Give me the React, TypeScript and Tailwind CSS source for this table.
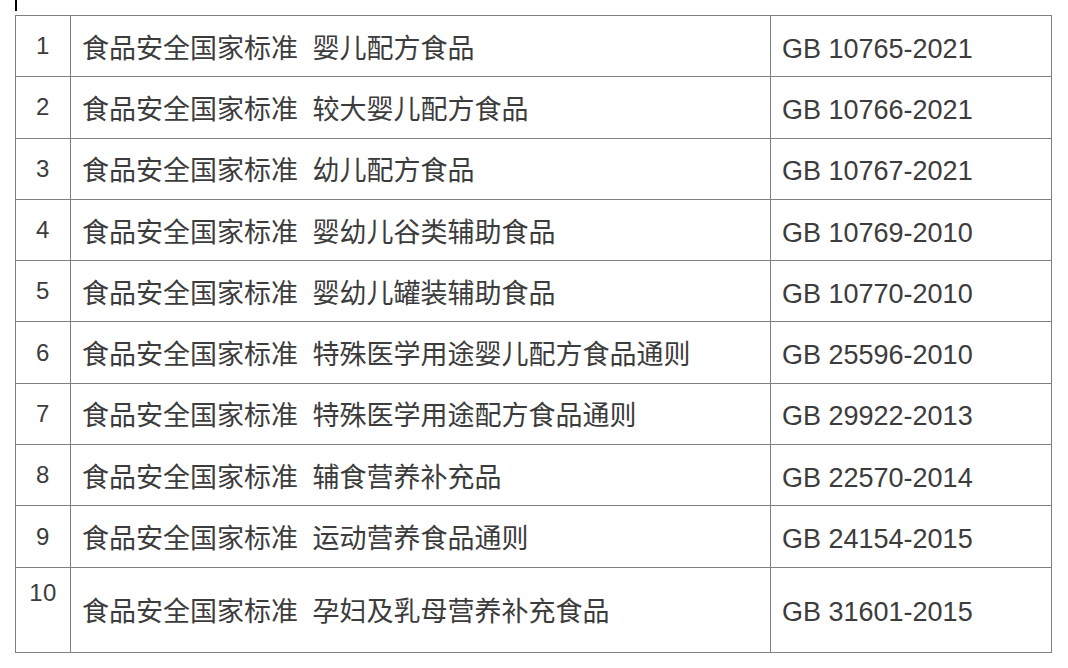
import React from "react";

const rows: [string, string, string][] = [
  ["1", "食品安全国家标准 婴儿配方食品", "GB 10765-2021"],
  ["2", "食品安全国家标准 较大婴儿配方食品", "GB 10766-2021"],
  ["3", "食品安全国家标准 幼儿配方食品", "GB 10767-2021"],
  ["4", "食品安全国家标准 婴幼儿谷类辅助食品", "GB 10769-2010"],
  ["5", "食品安全国家标准 婴幼儿罐装辅助食品", "GB 10770-2010"],
  ["6", "食品安全国家标准 特殊医学用途婴儿配方食品通则", "GB 25596-2010"],
  ["7", "食品安全国家标准 特殊医学用途配方食品通则", "GB 29922-2013"],
  ["8", "食品安全国家标准 辅食营养补充品", "GB 22570-2014"],
  ["9", "食品安全国家标准 运动营养食品通则", "GB 24154-2015"],
];

const numCls = "text-[24px] leading-[30px] tracking-[0.5px]";

export default function App() {
  return (
    <div
      className="w-[1068px] h-[668px] bg-white text-[#3c3c3c]"
      style={{ fontFamily: '"Liberation Sans", "Noto Sans CJK SC", sans-serif' }}
    >
      <div className="ml-[15px] w-[2px] h-[11px] bg-black" />
      <div className="mt-[4px] ml-[15px] w-[1037px] border-l border-t border-[#808080] grid grid-cols-[55px_700px_281px]">
        {rows.map(([n, name, code]) => (
          <React.Fragment key={n}>
            <div className="h-[61.3px] border-r border-b border-[#808080] flex items-center justify-center">
              <span className={numCls}>{n}</span>
            </div>
            <div className="h-[61.3px] border-r border-b border-[#808080] flex items-center pl-[11px] pt-[5px] text-[27px] leading-[34px] [word-spacing:7px] whitespace-nowrap">
              {name}
            </div>
            <div className="h-[61.3px] border-r border-b border-[#808080] flex items-center pl-[11px] pt-[5px] text-[27px] leading-[34px]">
              {code}
            </div>
          </React.Fragment>
        ))}
        <div className="h-[85.3px] border-r border-b border-[#808080] flex items-start justify-center pt-[10px]">
          <span className={numCls}>10</span>
        </div>
        <div className="h-[85.3px] border-r border-b border-[#808080] flex items-center pl-[11px] pt-[4px] text-[27px] leading-[34px] [word-spacing:7px] whitespace-nowrap">
          食品安全国家标准 孕妇及乳母营养补充食品
        </div>
        <div className="h-[85.3px] border-r border-b border-[#808080] flex items-center pl-[11px] pt-[4px] text-[27px] leading-[34px]">
          GB 31601-2015
        </div>
      </div>
    </div>
  );
}
